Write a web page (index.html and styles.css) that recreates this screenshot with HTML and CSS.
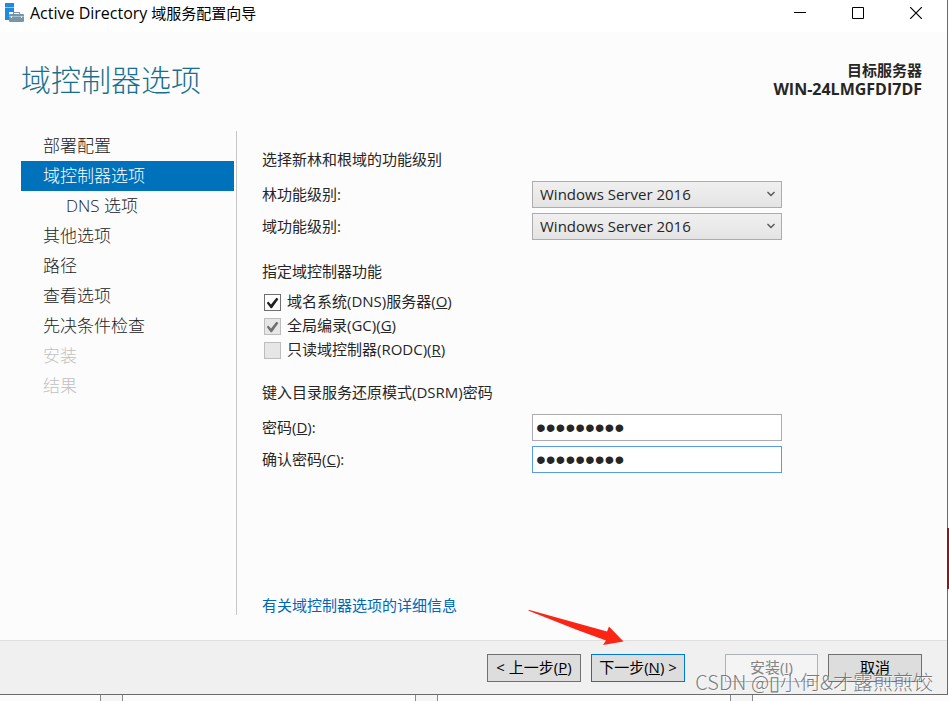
FILE: index.html
```html
<!DOCTYPE html>
<html lang="zh-CN">
<head>
<meta charset="utf-8">
<title>Active Directory 域服务配置向导</title>
<link rel="stylesheet" href="styles.css">
</head>
<body>
<div class="desktop">
  <div class="window">
    <header class="titlebar">
      <svg class="app-icon" width="20" height="20" viewBox="0 0 20 20" aria-hidden="true">
        <path d="M0 0h9v9H4v8H0z" fill="#1f8bdc"/>
        <path d="M0 4h9v1H0z" fill="#8cc8f2"/>
        <path d="M8 9h7v3h-1v-2H9v2H8z" fill="#7c98a8"/>
        <rect x="4" y="11" width="15" height="8" rx="1" fill="#7796a8"/>
        <path d="M4 13h15v1H4z" fill="#a9bfcb"/>
        <path d="M6 13h1v2H6zM16 13h1v2h-1z" fill="#e8f0f4"/>
      </svg>
      <span class="caption"><span class="latin">Active Directory</span> 域服务配置向导</span>
      <div class="window-controls">
        <button type="button" aria-label="最小化"><svg width="12" height="12" viewBox="0 0 12 12"><path d="M0 5.5h12" stroke="#000"/></svg></button>
        <button type="button" aria-label="最大化"><svg width="12" height="12" viewBox="0 0 12 12"><path d="M.5.5h11v11H.5z" fill="none" stroke="#000"/></svg></button>
        <button type="button" aria-label="关闭"><svg width="12" height="12" viewBox="0 0 12 12"><path d="M0 0l12 12M12 0L0 12" stroke="#000" stroke-width="1.2"/></svg></button>
      </div>
    </header>

    <div class="page-head">
      <h1>域控制器选项</h1>
      <div class="target"><div>目标服务器</div><div class="latin">WIN-24LMGFDI7DF</div></div>
    </div>

    <div class="page-body">
      <nav class="steps">
        <a href="#">部署配置</a>
        <a href="#" class="current" aria-current="step">域控制器选项</a>
        <a href="#" class="sub">DNS 选项</a>
        <a href="#">其他选项</a>
        <a href="#">路径</a>
        <a href="#">查看选项</a>
        <a href="#">先决条件检查</a>
        <a class="disabled">安装</a>
        <a class="disabled">结果</a>
      </nav>

      <main class="options">
        <h2>选择新林和根域的功能级别</h2>
        <div class="fields">
          <label for="forest">林功能级别:</label>
          <div class="select-box">
            <select id="forest"><option>Windows Server 2016</option></select>
            <svg width="8" height="6" viewBox="0 0 8 6"><path d="M.5 1L4 4.5 7.5 1" fill="none" stroke="#555" stroke-width="1.4"/></svg>
          </div>
          <label for="domain">域功能级别:</label>
          <div class="select-box">
            <select id="domain"><option>Windows Server 2016</option></select>
            <svg width="8" height="6" viewBox="0 0 8 6"><path d="M.5 1L4 4.5 7.5 1" fill="none" stroke="#555" stroke-width="1.4"/></svg>
          </div>
        </div>

        <h2>指定域控制器功能</h2>
        <div class="checks">
          <label><input type="checkbox" checked><span>域名系统(DNS)服务器(<u>O</u>)</span></label>
          <label><input type="checkbox" checked disabled><span>全局编录(GC)(<u>G</u>)</span></label>
          <label><input type="checkbox" disabled><span>只读域控制器(RODC)(<u>R</u>)</span></label>
        </div>

        <h2>键入目录服务还原模式(DSRM)密码</h2>
        <div class="fields">
          <label for="pwd">密码(<u>D</u>):</label>
          <input id="pwd" type="password" value="password1">
          <label for="pwd2">确认密码(<u>C</u>):</label>
          <input id="pwd2" class="active" type="password" value="password1">
        </div>

        <a class="more" href="#">有关域控制器选项的详细信息</a>
      </main>
    </div>

    <footer class="actions">
      <button type="button">&lt; 上一步(<u>P</u>)</button>
      <div class="next">
        <button type="button" class="default">下一步(<u>N</u>) &gt;</button>
        <svg class="pointer" width="96" height="36" viewBox="0 0 96 36" aria-hidden="true">
          <path d="M0 .5L1.500 0 79 21.500 81 16.500 95.500 31.500 75 35 78 30.500 48 19.500z" fill="#fb2516"/>
        </svg>
      </div>
      <button type="button" class="install" disabled>安装(<u>I</u>)</button>
      <button type="button">取消</button>
    </footer>
  </div>
  <div class="behind"><i></i><i></i><i></i></div>
  <div class="edge"></div>
  <div class="watermark">CSDN @▯小何&amp;才露煎煎饺</div>
</div>
</body>
</html>
```
FILE: styles.css
```css
* {
  box-sizing: border-box;
}

body {
  margin: 0;
  background: #fcfcfc;
  color: #262626;
  font: 15px/24px "Open Sans", "Noto Sans CJK SC", sans-serif;
}

.desktop {
  position: relative;
  display: flex;
  flex-direction: column;
  min-height: 100vh;
  overflow: hidden;
}

.window {
  flex: 1;
  display: flex;
  flex-direction: column;
  margin-right: 1px;
  border-right: 1px solid #6b6b6b;
  border-bottom: 1px solid #6b6b6b;
}

.titlebar {
  display: flex;
  align-items: center;
  height: 32px;
  padding: 0 2px 6px 5px;
  background: #fff;
  color: #000;
}

.app-icon {
  margin-right: 5px;
}

.caption {
  flex: 1;
}

.latin {
  font-size: 16px;
}

.window-controls {
  display: flex;
}

.window-controls button {
  display: grid;
  place-items: center;
  width: 58px;
  height: 26px;
  padding: 0;
  border: 0;
  background: none;
}

.page-head {
  display: flex;
  justify-content: space-between;
  align-items: flex-start;
  height: 99px;
  padding: 29px 25px 0 21px;
}

h1 {
  margin: 0;
  color: #17708f;
  font-size: 30px;
  font-weight: 300;
  line-height: 38px;
}

.target {
  font-weight: 700;
  line-height: 19px;
  text-align: right;
}

.page-body {
  flex: 1;
  display: flex;
}

.steps {
  width: 237px;
  margin-bottom: 25px;
  padding: 0 2px 0 21px;
  border-right: 1px solid #c6c6c6;
  font-size: 17px;
  font-weight: 300;
  line-height: 30px;
}

.steps a {
  display: block;
  padding-left: 22px;
  color: #222;
  text-decoration: none;
}

.steps .sub {
  padding-left: 45px;
}

.steps .current {
  background: #0072bc;
  color: #fff;
}

.steps .disabled {
  color: #c0c0c0;
}

.options {
  flex: 1;
  display: flex;
  flex-direction: column;
  align-items: flex-start;
  padding: 16px 25px 23px;
}

h2 {
  margin: 0;
  font-size: 15px;
  font-weight: 400;
}

.fields {
  display: grid;
  grid-template-columns: 270px 250px;
  gap: 5px 0;
  margin: 10px 0 19px;
}

.fields label {
  line-height: 26px;
}

.select-box {
  position: relative;
}

.select-box svg {
  position: absolute;
  top: 10px;
  right: 7px;
  pointer-events: none;
}

select,
.fields input {
  display: block;
  width: 100%;
  height: 27px;
  border: 1px solid #acacac;
  border-radius: 0;
  color: #262626;
  font: 15px "Open Sans", sans-serif;
}

select {
  appearance: none;
  padding: 0 7px 2px;
  background: linear-gradient(#f0f0f0, #e4e4e4);
}

.fields input {
  padding: 0 3px;
  background: #fff;
  font-family: "Liberation Sans", sans-serif;
  font-size: 28px;
}

.fields .active {
  border-color: #569de5;
}

.checks {
  margin: 6px 0 19px;
}

.checks label {
  display: flex;
  gap: 6px;
  padding-left: 2px;
}

.checks input {
  appearance: none;
  width: 17px;
  height: 17px;
  margin: 5px 0 0;
  border: 1px solid #707070;
  background: #fff;
}

.checks input:checked::before {
  content: "";
  display: block;
  width: 15px;
  height: 15px;
  background: #212121;
  clip-path: polygon(12% 54%, 22% 44%, 40% 64%, 76% 18%, 90% 26%, 46% 88%, 38% 88%);
}

.checks input:disabled {
  border-color: #bcbcbc;
  background: #e6e6e6;
}

.checks input:disabled::before {
  background: #707070;
}

.more {
  margin-top: auto;
  color: #0066b8;
  text-decoration: none;
}

.actions {
  display: flex;
  justify-content: flex-end;
  gap: 10px;
  padding: 13px 25px 12px;
  border-top: 1px solid #dfdfdf;
  background: #f0f0f0;
}

.actions button {
  width: 94px;
  height: 28px;
  padding: 0 0 2px;
  border: 1px solid #707070;
  background: #ddd;
  color: #000;
  font: inherit;
  line-height: 24px;
  white-space: nowrap;
}

.actions .default {
  border-color: #0078d7;
}

.actions .install {
  width: 93px;
  margin-left: 30px;
  border-color: #adb2b5;
  background: #f4f4f4;
  color: #838383;
}

.next {
  position: relative;
}

.pointer {
  position: absolute;
  top: -44px;
  left: -63px;
}

.behind {
  display: flex;
  gap: 292px;
  height: 6px;
  padding-left: 100px;
}

.behind i {
  flex: none;
  width: 23px;
  border: solid #8a8a8a;
  border-width: 0 1px;
  background: #f5f5f5;
}

.edge {
  position: absolute;
  top: 528px;
  right: 0;
  width: 2px;
  height: 61px;
  background: #a50d0d;
}

.watermark {
  position: absolute;
  right: 16px;
  bottom: 5px;
  color: rgba(100, 100, 100, 0.85);
  font: 300 20px/28px "Noto Sans CJK SC", sans-serif;
  text-shadow: 1px 1px 0 rgba(255, 255, 255, 0.6);
  pointer-events: none;
}
```
